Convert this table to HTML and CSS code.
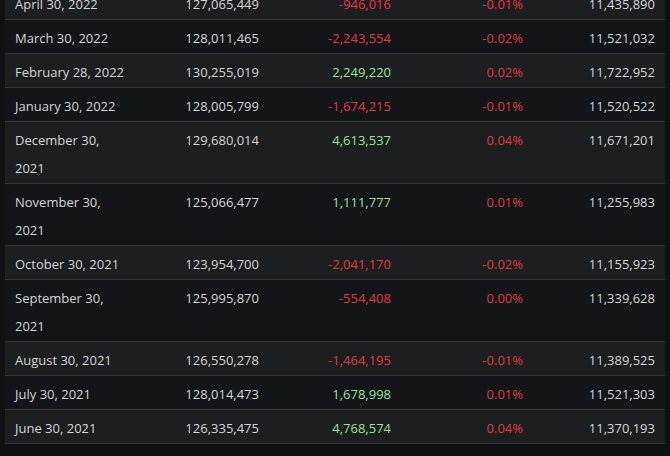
FILE: index.html
```html
<!DOCTYPE html>
<html>
<head>
<meta charset="utf-8">
<link rel="stylesheet" href="styles.css">
</head>
<body>
<div class="wrap">
<table class="hist">
<colgroup><col class="c"><col class="c"><col class="c"><col class="c"><col class="c"></colgroup>
<tbody>
<tr class="odd"><td class="date">April 30, 2022</td><td class="num">127,065,449</td><td class="num neg">-946,016</td><td class="num neg">-0.01%</td><td class="num">11,435,890</td></tr>
<tr><td class="date">March 30, 2022</td><td class="num">128,011,465</td><td class="num neg">-2,243,554</td><td class="num neg">-0.02%</td><td class="num">11,521,032</td></tr>
<tr class="odd"><td class="date">February 28, 2022</td><td class="num">130,255,019</td><td class="num pos">2,249,220</td><td class="num neg">0.02%</td><td class="num">11,722,952</td></tr>
<tr><td class="date">January 30, 2022</td><td class="num">128,005,799</td><td class="num neg">-1,674,215</td><td class="num neg">-0.01%</td><td class="num">11,520,522</td></tr>
<tr class="odd"><td class="date">December 30, 2021</td><td class="num">129,680,014</td><td class="num pos">4,613,537</td><td class="num neg">0.04%</td><td class="num">11,671,201</td></tr>
<tr><td class="date">November 30, 2021</td><td class="num">125,066,477</td><td class="num pos">1,111,777</td><td class="num neg">0.01%</td><td class="num">11,255,983</td></tr>
<tr class="odd"><td class="date">October 30, 2021</td><td class="num">123,954,700</td><td class="num neg">-2,041,170</td><td class="num neg">-0.02%</td><td class="num">11,155,923</td></tr>
<tr><td class="date">September 30, 2021</td><td class="num">125,995,870</td><td class="num neg">-554,408</td><td class="num neg">0.00%</td><td class="num">11,339,628</td></tr>
<tr class="odd"><td class="date">August 30, 2021</td><td class="num">126,550,278</td><td class="num neg">-1,464,195</td><td class="num neg">-0.01%</td><td class="num">11,389,525</td></tr>
<tr><td class="date">July 30, 2021</td><td class="num">128,014,473</td><td class="num pos">1,678,998</td><td class="num neg">0.01%</td><td class="num">11,521,303</td></tr>
<tr class="odd"><td class="date">June 30, 2021</td><td class="num">126,335,475</td><td class="num pos">4,768,574</td><td class="num neg">0.04%</td><td class="num">11,370,193</td></tr>
</tbody>
</table>
</div>
</body>
</html>
```
FILE: styles.css
```css
html, body {
  margin: 0;
  padding: 0;
  background: #0f1113;
  overflow: hidden;
}
.wrap {
  padding-left: 5px;
  margin-top: -14px;
}
.hist {
  border-collapse: collapse;
  table-layout: fixed;
  width: 660px;
  font-family: "Open Sans", sans-serif;
  font-size: 13px;
  color: #d6d6d6;
}
.hist .c { width: 132px; }
.hist tr { background: #131518; }
.hist tr.odd { background: #1c1e20; }
.hist td {
  padding: 4px 10px 1px 10px;
  line-height: 28px;
  vertical-align: top;
  border-bottom: 1px solid #36393c;
}
.hist .date { text-align: left; }
.hist .num { text-align: right; }
.hist .neg { color: #e23b3f; }
.hist .pos { color: #98e598; }
```
